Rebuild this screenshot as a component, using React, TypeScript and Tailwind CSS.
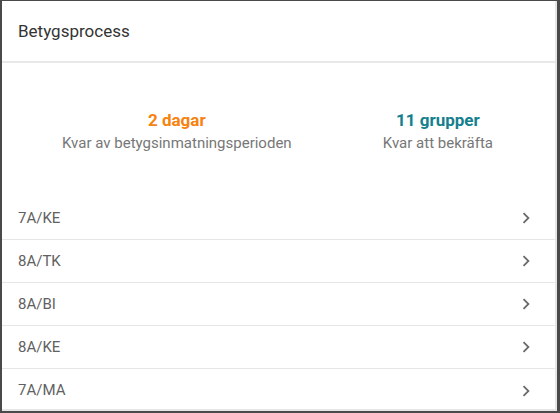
import { MdChevronRight } from "react-icons/md";

const groups = ["7A/KE", "8A/TK", "8A/BI", "8A/KE", "7A/MA"];

export default function App() {
  return (
    <div
      className="h-[413px] w-[560px] overflow-hidden border-t border-l-2 border-r-[3px] border-b-2 border-[#4a4a4a] bg-white"
      style={{ fontFamily: "Roboto, 'Liberation Sans', sans-serif" }}
    >
      <div className="h-full border-r-2 border-b-2 border-[#e6e6e6]">
        {/* Header */}
        <div className="flex h-[62px] items-center border-b-2 border-[#e8e8e8] pt-px pl-4">
          <h2 className="text-[17px] text-[#333]">Betygsprocess</h2>
        </div>

        {/* Stats */}
        <div className="flex justify-between pt-[45px] pr-[62px] pb-[44px] pl-[60px]">
          <div className="text-center">
            <p className="text-[17px] leading-6 font-bold text-[#f7820f]">2 dagar</p>
            <p className="mt-px text-[15px] leading-5 text-[#777]">
              Kvar av betygsinmatningsperioden
            </p>
          </div>
          <div className="text-center">
            <p className="text-[17px] leading-6 font-bold text-[#147f8e]">11 grupper</p>
            <p className="mt-px text-[15px] leading-5 text-[#777]">Kvar att bekräfta</p>
          </div>
        </div>

        {/* Group list */}
        <div className="flex flex-col">
          {groups.map((g, i) => (
            <div
              key={g}
              className={`flex h-[43px] shrink-0 items-center justify-between pr-[18px] pl-4 ${
                i < groups.length - 1 ? "border-b border-[#e6e6e6]" : ""
              }`}
            >
              <span className="text-[15px] text-[#616161]">{g}</span>
              <MdChevronRight size={22} className="text-[#6b6b6b]" />
            </div>
          ))}
        </div>
      </div>
    </div>
  );
}
